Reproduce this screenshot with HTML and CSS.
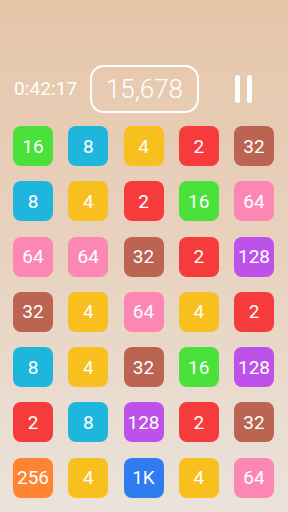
FILE: index.html
```html
<!DOCTYPE html>
<html lang="en">
<head>
    <meta charset="UTF-8">
    <meta name="viewport" content="width=device-width, initial-scale=1.0">
    <title>2048 Merge</title>
    <link rel="stylesheet" href="styles.css">
</head>
<body>
    <!-- 상단 바: 시간, 점수, 일시정지 -->
    <div class="top-bar">
        <span class="timer">0:42:17</span>
        <div class="score-box">15,678</div>
        <button class="pause-btn" aria-label="pause">
            <span class="bar"></span>
            <span class="bar"></span>
        </button>
    </div>

    <!-- 게임 보드 -->
    <div class="board">
        <div class="tile t16">16</div>
        <div class="tile t8">8</div>
        <div class="tile t4">4</div>
        <div class="tile t2">2</div>
        <div class="tile t32">32</div>

        <div class="tile t8">8</div>
        <div class="tile t4">4</div>
        <div class="tile t2">2</div>
        <div class="tile t16">16</div>
        <div class="tile t64">64</div>

        <div class="tile t64">64</div>
        <div class="tile t64">64</div>
        <div class="tile t32">32</div>
        <div class="tile t2">2</div>
        <div class="tile t128">128</div>

        <div class="tile t32">32</div>
        <div class="tile t4">4</div>
        <div class="tile t64">64</div>
        <div class="tile t4">4</div>
        <div class="tile t2">2</div>

        <div class="tile t8">8</div>
        <div class="tile t4">4</div>
        <div class="tile t32">32</div>
        <div class="tile t16">16</div>
        <div class="tile t128">128</div>

        <div class="tile t2">2</div>
        <div class="tile t8">8</div>
        <div class="tile t128">128</div>
        <div class="tile t2">2</div>
        <div class="tile t32">32</div>

        <div class="tile t256">256</div>
        <div class="tile t4">4</div>
        <div class="tile t1k">1K</div>
        <div class="tile t4">4</div>
        <div class="tile t64">64</div>
    </div>
</body>
</html>
```

FILE: styles.css
```css
html, body {
    height: 100%;
}

body {
    margin: 0;
    font-family: Roboto, "Liberation Sans", sans-serif;
    color: #ffffff;
    background: linear-gradient(to bottom, #e6c6a9 0%, #e8d2bf 50%, #ebe3db 100%);
    overflow: hidden;
}

/* 상단 바 */
.top-bar {
    display: grid;
    grid-template-columns: 90px 109px 1fr;
    align-items: center;
    padding: 64px 0 0 0;
    height: 49px;
}

.timer {
    font-size: 19px;
    padding-left: 14px;
    letter-spacing: 0.1px;
}

.score-box {
    height: 44px;
    border: 2px solid #ffffff;
    border-radius: 14px;
    display: flex;
    align-items: center;
    justify-content: center;
    font-size: 26px;
    font-weight: 300;
}

.pause-btn {
    justify-self: start;
    margin-left: 36px;
    display: flex;
    gap: 7px;
    padding: 0;
    border: none;
    background: none;
    cursor: pointer;
}

.pause-btn .bar {
    width: 5px;
    height: 28px;
    border-radius: 3px;
    background: #ffffff;
}

/* 게임 보드 */
.board {
    display: grid;
    grid-template-columns: repeat(5, 40px);
    grid-auto-rows: 40px;
    gap: 15.3px 15.25px;
    padding: 13px 0 0 13px;
}

.tile {
    border-radius: 8px;
    display: flex;
    align-items: center;
    justify-content: center;
    font-size: 19px;
}

.t2 { background: #f63b3d; }
.t4 { background: #f7c01f; }
.t8 { background: #1fb6dd; }
.t16 { background: #4ae13b; }
.t32 { background: #bb6451; }
.t64 { background: #fb87b2; }
.t128 { background: #bd52eb; }
.t256 { background: #fe8431; }
.t1k { background: #2f7cf1; }
```
